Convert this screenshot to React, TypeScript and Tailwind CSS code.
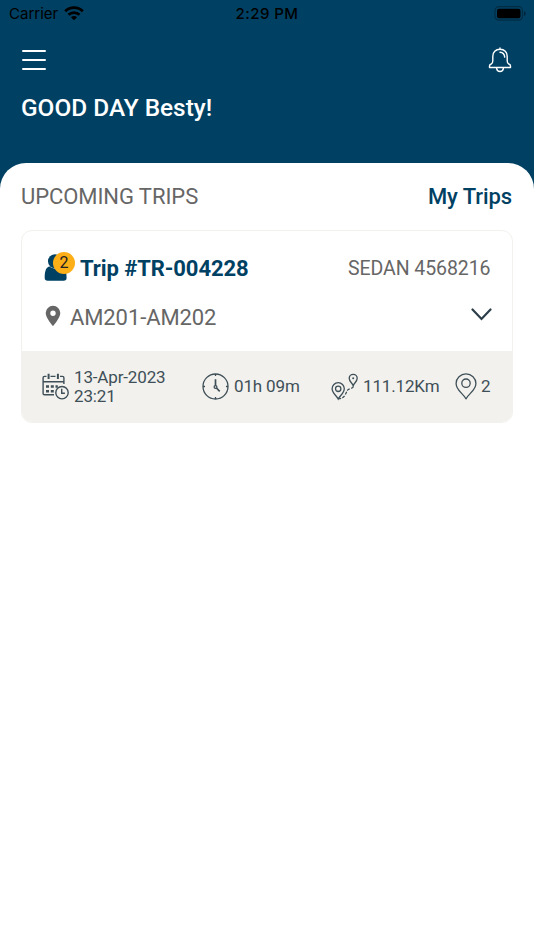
function StatusBar() {
  return (
    <div className="relative flex h-7 items-center justify-between pl-[9px] pr-2 text-[15px] text-black font-['Inter',sans-serif]">
      <div className="flex items-center gap-[6px]">
        <span>Carrier</span>
        <svg className="mb-[2px]" width="20" height="15" viewBox="0 0 20 15" fill="none" stroke="#000" strokeWidth="2.8">
          <path d="M1.2 5.3C6.1.4 13.9.4 18.8 5.3" />
          <path d="M4.5 8.8C7.5 5.9 12.5 5.9 15.5 8.8" />
          <path d="M10 14.3 6.9 11.2C8.6 9.6 11.4 9.6 13.1 11.2Z" fill="#000" stroke="none" />
        </svg>
      </div>
      <span className="absolute left-0 w-full text-center font-medium tracking-[0.45px]">2:29 PM</span>
      <svg className="mb-[2px]" width="32" height="15" viewBox="0 0 32 15">
        <rect x="1" y=".7" width="27.5" height="13.500" rx="4" fill="none" stroke="#002c44" strokeWidth="1.2" />
        <rect x="3" y="2.700" width="23.500" height="9.500" rx="2" />
        <path d="M30 5v5q1.800-1 1.800-2.500T30 5Z" fill="#002438" />
      </svg>
    </div>
  );
}

function BellIcon() {
  return (
    <svg className="mb-px" width="24" height="26" viewBox="0 0 24 26" fill="none" stroke="#fff" strokeWidth="1.4" strokeLinecap="round" strokeLinejoin="round">
      <path d="M12 .9v1.300M12 2.200C7.500 2.200 4.800 5.400 4.800 9.200v4.600c0 1.700-.4 2.700-1.600 3.200-1.300.5-1.700 1-1.700 2v1.500h21V19c0-1-.4-1.500-1.700-2-1.200-.5-1.600-1.500-1.600-3.200V9.200C19.200 5.400 16.500 2.200 12 2.200Z" />
      <path d="M12 5.300c2.900.2 4.500 2.100 4.700 4.800" />
      <path d="M8.600 21.300c.3 2 1.700 3.200 3.400 3.200s3.100-1.200 3.400-3.200" />
    </svg>
  );
}

function CalendarIcon() {
  return (
    <svg width="27" height="27" viewBox="0 0 27 27" fill="none" stroke="#3f4f58" strokeWidth="1.4">
      <path d="M4.500 3.400H2.500Q1.100 3.400 1.100 4.800v15.600q0 1.400 1.400 1.400h9.500M8.500 3.400h5M18 3.400h2.500q1.400 0 1.400 1.400V11M1.100 8.800h20.800" />
      <path d="M6.600.7v5.200M15.900.7v5.200" strokeWidth="2" />
      <path d="M4 13.500h3M8.800 13.500h3M13.500 13.500h2.300M4 18.300h3M8.800 18.300h3" strokeWidth="2.400" />
      <circle cx="20" cy="19.700" r="6.200" />
      <path d="M19.700 15.800v4.500h3.200" />
    </svg>
  );
}

function ClockIcon() {
  return (
    <svg width="27" height="27" viewBox="0 0 27 27" fill="none" stroke="#3f4f58" strokeWidth="1.3">
      <circle cx="13.500" cy="13.500" r="12.500" />
      <path d="M13.500 1v2M13.500 24v2M1 13.500h2M24 13.500h2" />
      <path d="M13.500 6.300v6.500M14.500 15l3.200 3.300" strokeWidth="1.700" />
      <circle cx="13.500" cy="14" r="1.400" />
    </svg>
  );
}

function RouteIcon() {
  return (
    <svg width="28" height="28" viewBox="0 0 28 28" fill="none" stroke="#3f4f58" strokeWidth="1.3">
      <path d="M7.200 26C5.800 22.800 1.100 20.200 1.100 15.800a6.100 6.100 0 0 1 12.200 0C13.300 20.200 8.600 22.800 7.200 26Z" />
      <circle cx="7.200" cy="15.800" r="2.700" />
      <path d="M22.200 12.700C21.300 10 18.200 8.500 18.200 5.300a4 4 0 0 1 8 0C26.200 8.500 23.100 10 22.200 12.700Z" />
      <circle cx="22.200" cy="5.300" r="1" fill="#3f4f58" stroke="none" />
      <path d="M22.200 13.500c-.3 2.700-4.300 1.600-5.900 4-1.800 2.700-2 8-8.800 8.400" strokeDasharray="3 1.500" />
    </svg>
  );
}

function StopIcon() {
  return (
    <svg width="22" height="27" viewBox="0 0 22 27" fill="none" stroke="#3f4f58" strokeWidth="1.3" strokeLinejoin="round">
      <path d="M11 25.800C7.800 20.300 1.100 17 1.100 10.400a9.900 9.500 0 0 1 19.800 0C20.900 17 14.200 20.300 11 25.800Z" />
      <circle cx="11" cy="10.200" r="4.200" />
    </svg>
  );
}

function TripCard() {
  return (
    <div className="mt-[18px] h-[193px] overflow-hidden rounded-[11px] border border-[#f2f1ed]">
      <div className="h-[120px] pl-[22px] pr-[20px] pt-[19px]">
        <div className="flex h-[36px] items-center">
          <div className="relative mb-[2px] h-[30px] w-[36px]">
            <svg width="24" height="30" viewBox="0 0 24 30" fill="#004163">
              <circle cx="11" cy="9.300" r="7" />
              <path d="M.7 26C.7 18.500 2.300 14.900 5.700 14.500c3.500 2.800 8.500 2.800 12 0 3.300.6 4.900 4 4.900 11.500q0 2.700-3 2.700H3.700q-3 0-3-2.700Z" />
            </svg>
            <span className="absolute left-[9px] top-0 flex h-[22px] w-[22px] items-center justify-center rounded-full bg-[#fcaf17] text-[16px] text-[#222]">2</span>
          </div>
          <span className="text-[22px] font-bold tracking-[-0.08px] text-[#004163]">Trip #TR-004228</span>
          <span className="ml-auto mr-[1.5px] mt-[1px] text-[19.5px] tracking-[-0.08px] text-[#666]">SEDAN 4568216</span>
        </div>
        <div className="mt-[14px] flex h-[34px] items-center">
          <svg className="mb-[3px] ml-[1px]" width="16" height="22" viewBox="0 0 16 22" fill="#666" fillRule="evenodd">
            <path d="M8 .8A7.300 7.300 0 0 0 .7 8.100C.7 13 8 21.300 8 21.300S15.300 13 15.300 8.100A7.300 7.300 0 0 0 8 .8Zm0 4.700a2.700 2.700 0 1 1 0 5.400 2.700 2.700 0 0 1 0-5.400Z" />
          </svg>
          <span className="ml-[9px] text-[22px] tracking-[-0.1px] text-[#666]">AM201-AM202</span>
          <svg className="mb-[6px] ml-auto" width="22" height="14" viewBox="0 0 22 14" fill="none" stroke="#2c3e4a" strokeWidth="2.2" strokeLinecap="round">
            <path d="M2.500 2.500 11.500 12 20.500 2.500" />
          </svg>
        </div>
      </div>
      <div className="flex h-[73px] items-center bg-[#f2f1ed] pb-[2px] pl-5 text-[17px] tracking-[-0.15px] text-[#3f4f58]">
        <div className="flex w-[160px] items-center gap-[5px]">
          <CalendarIcon />
          <div className="leading-[19px]">13-Apr-2023<br />23:21</div>
        </div>
        <div className="flex w-[129px] items-center gap-[5px]">
          <ClockIcon />
          <span>01h 09m</span>
        </div>
        <div className="flex w-[124px] items-center gap-[4px]">
          <RouteIcon />
          <span>111.12Km</span>
        </div>
        <div className="flex items-center gap-[4px]">
          <StopIcon />
          <span>2</span>
        </div>
      </div>
    </div>
  );
}

export default function App() {
  return (
    <div className="min-h-[950px] w-full bg-[#004163] font-['Roboto',sans-serif]">
      <div className="h-[163px]">
        <StatusBar />
        <div className="flex h-[64px] items-center justify-between pl-[22px] pr-[22px]">
          <div className="flex w-[24px] flex-col gap-[7px]">
            <div className="h-[2px] rounded bg-white"></div>
            <div className="h-[2px] rounded bg-white"></div>
            <div className="h-[2px] rounded bg-white"></div>
          </div>
          <BellIcon />
        </div>
        <h1 className="pl-[21px] text-[24.4px] font-medium leading-8 text-white">GOOD DAY Besty!</h1>
      </div>
      <main className="h-[787px] rounded-t-[26px] bg-white px-[21px] pt-[17px]">
        <div className="flex h-[32px] items-center justify-between text-[22px]">
          <h2 className="tracking-[-0.07px] text-[#666]">UPCOMING TRIPS</h2>
          <span className="mr-[1px] font-medium tracking-[-0.08px] text-[#004163]">My Trips</span>
        </div>
        <TripCard />
      </main>
    </div>
  );
}
